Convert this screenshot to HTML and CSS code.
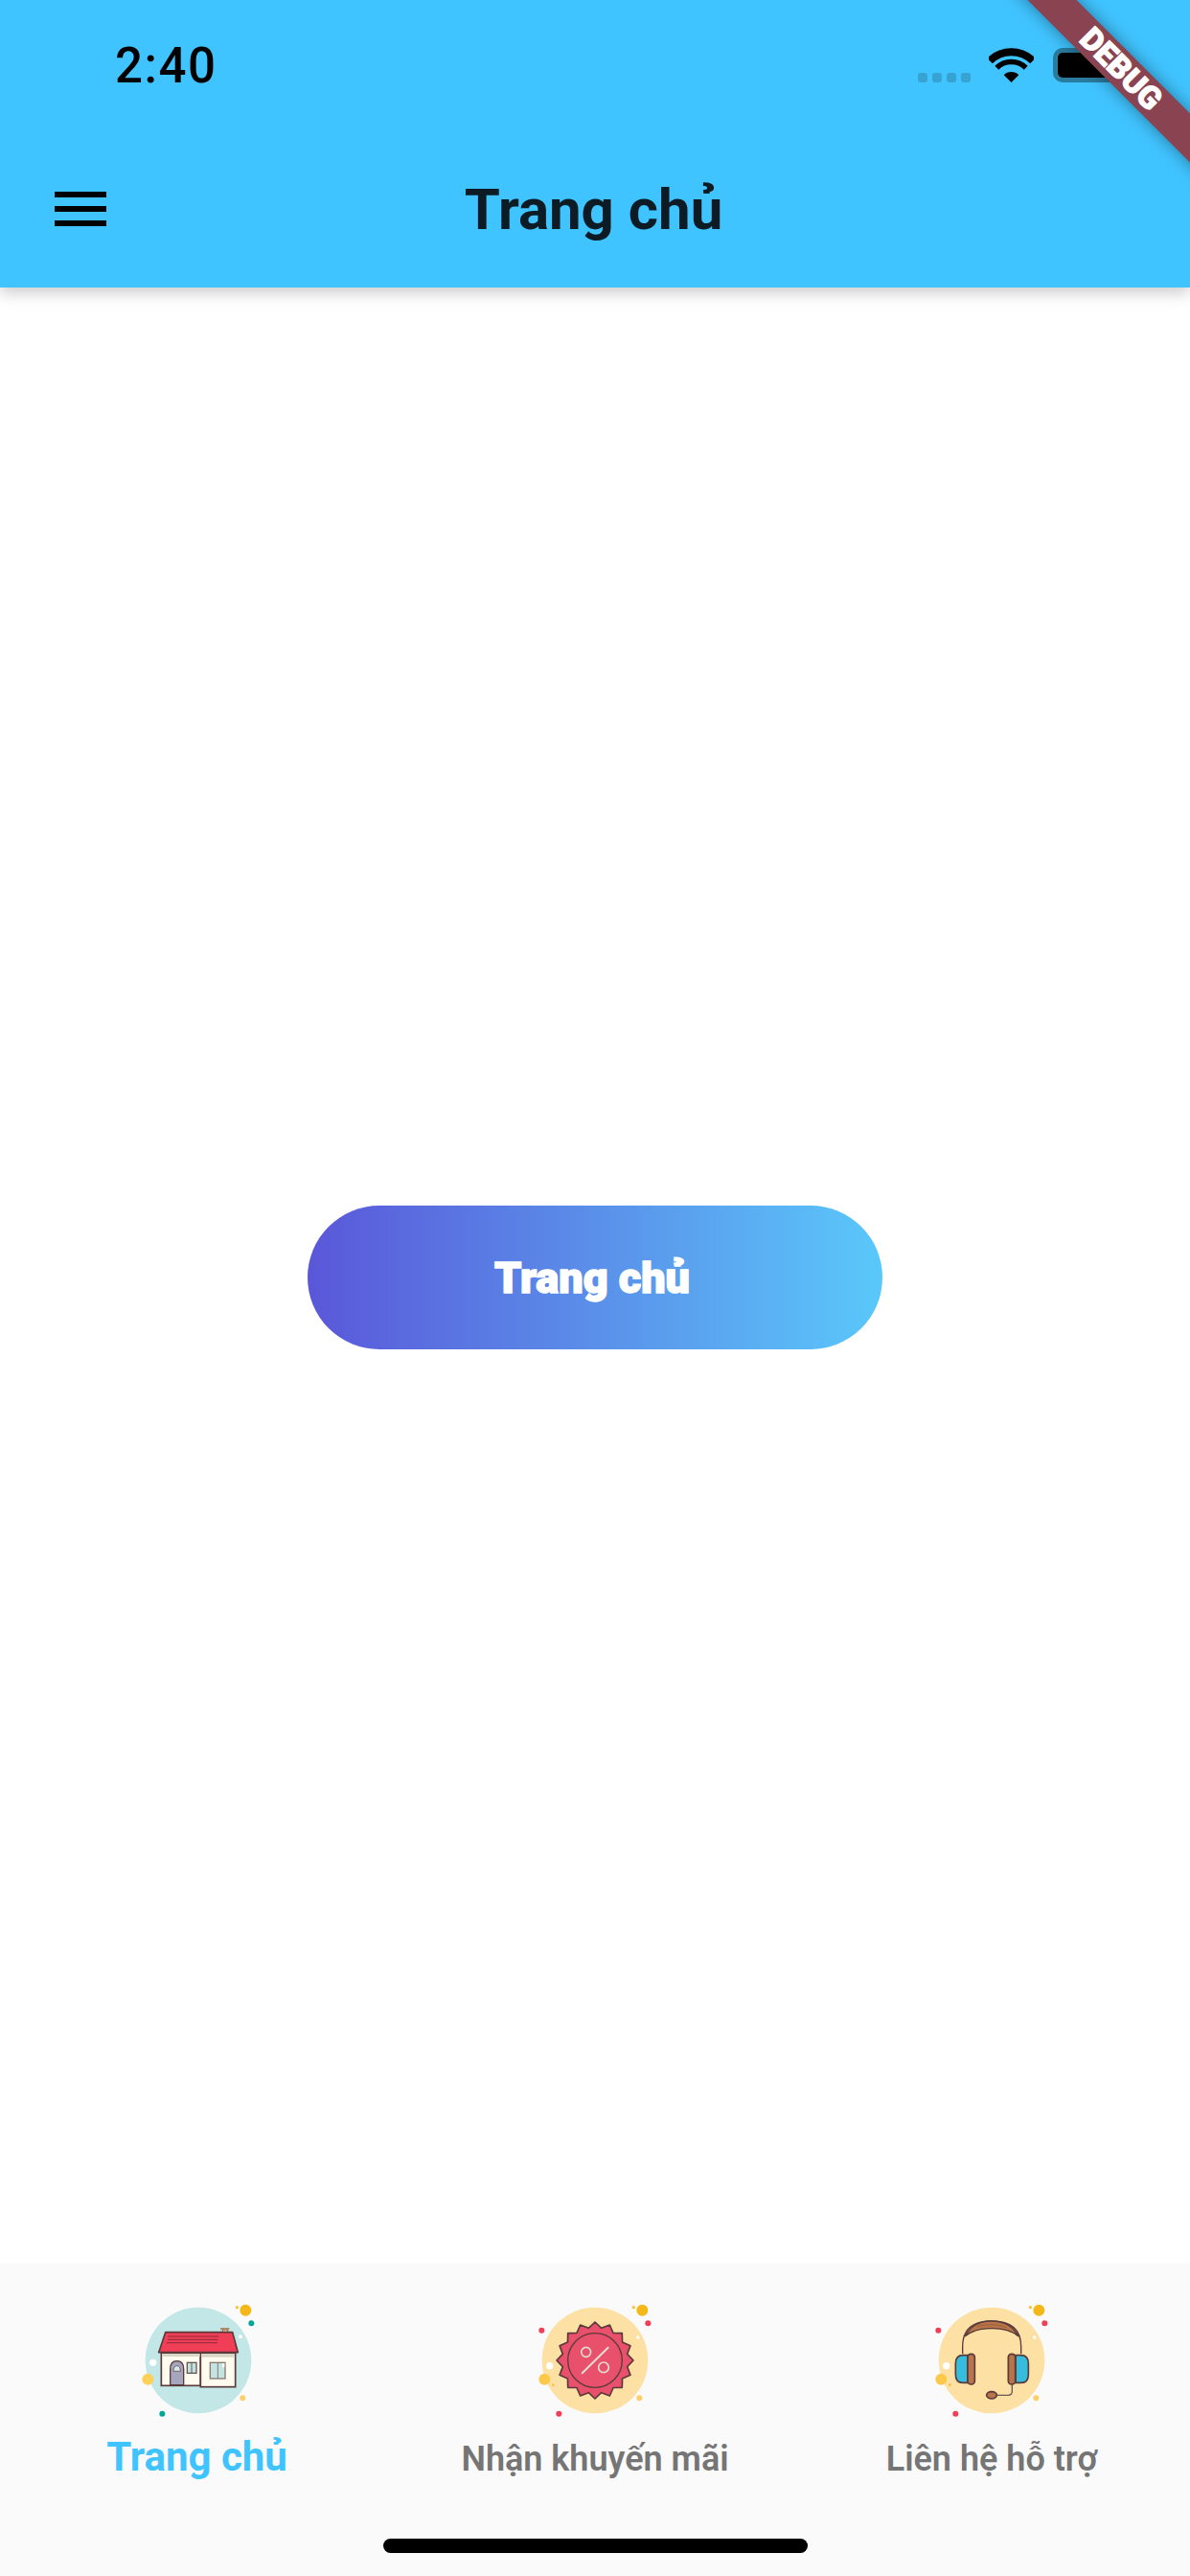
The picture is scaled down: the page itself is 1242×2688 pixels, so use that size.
FILE: index.html
```html
<!DOCTYPE html>
<html lang="vi">
<head>
    <meta charset="UTF-8">
    <meta name="viewport" content="width=device-width, initial-scale=1.0">
    <title>Trang chủ</title>
    <link rel="stylesheet" href="styles.css">
</head>
<body>
    <div class="screen">
        <header class="appbar">
            <div class="statusbar">
                <span class="time">2:40</span>
                <div class="status-icons">
                    <div class="signal"><i></i><i></i><i></i><i></i></div>
                    <svg class="wifi" width="47" height="36" viewBox="0 0 47 36">
                        <path d="M1 13.5A32 32 0 0 1 46 13.5" fill="none" stroke="#000" stroke-width="8"/>
                        <path d="M8.3 20.8A21.5 21.5 0 0 1 38.7 20.8" fill="none" stroke="#000" stroke-width="5.5"/>
                        <path d="M23.5 36L15.7 28.2A11 11 0 0 1 31.3 28.2Z" fill="#000"/>
                    </svg>
                    <div class="battery"><div class="battery-level"></div></div>
                    <div class="battery-cap"></div>
                </div>
            </div>
            <div class="toolbar">
                <div class="menu-icon"><i></i><i></i><i></i></div>
                <h1 class="title">Trang chủ</h1>
                <div></div>
            </div>
        </header>

        <main class="content">
            <button class="gradient-btn">Trang chủ</button>
        </main>

        <nav class="tabbar">
            <div class="tab tab-active">
                <svg class="tab-icon" viewBox="-195 -195 390 390">
                    <g transform="translate(-321 -248)">
                        <circle cx="321" cy="248" r="166" fill="#c3e6e6"/>
                        <circle cx="469" cy="91" r="18" fill="#f4b918"/>
                        <circle cx="442" cy="82" r="5" fill="#f7c23a"/>
                        <circle cx="487" cy="132" r="9" fill="#00a698"/>
                        <circle cx="453" cy="174" r="6" fill="#fff"/>
                        <circle cx="179" cy="255" r="11" fill="#fff"/>
                        <circle cx="163" cy="307" r="18" fill="#fdd05a"/>
                        <circle cx="460" cy="366" r="9" fill="#fcd066"/>
                        <circle cx="208" cy="415" r="9" fill="#00a698"/>
                        <rect x="397" y="152" width="16" height="42" fill="#f7c79b" stroke="#8a6a50" stroke-width="3"/>
                        <rect x="390" y="146" width="28" height="6" fill="#b08a68"/>
                        <rect x="205" y="225" width="123" height="102" fill="#fffbee" stroke="#5a3a3a" stroke-width="5"/>
                        <rect x="328" y="225" width="109" height="106" fill="#fffbee" stroke="#5a3a3a" stroke-width="5"/>
                        <rect x="208" y="228" width="118" height="8" fill="#d9d5c5"/>
                        <rect x="331" y="228" width="103" height="10" fill="#d9d5c5"/>
                        <path d="M218 160H428L445 223H197Z" fill="#ef3e56" stroke="#5a3a3a" stroke-width="5" stroke-linejoin="round"/>
                        <path d="M225 173H385M225 183H383M222 193H380" stroke="#8e2a3a" stroke-width="3"/>
                        <path d="M233 325V275Q233 250 254 250Q275 250 275 275V325Z" fill="#a5a5bd" stroke="#5a3a3a" stroke-width="4"/>
                        <path d="M243 282Q243 265 254 265Q265 265 265 282Z" fill="#d5e8e8" stroke="#5a3a3a" stroke-width="2"/>
                        <rect x="286" y="255" width="29" height="33" fill="#c3e4e2" stroke="#6b5a52" stroke-width="4"/>
                        <path d="M300 255V288" stroke="#6b5a52" stroke-width="3"/>
                        <rect x="358" y="255" width="47" height="50" fill="#c3e4e2" stroke="#8a7a70" stroke-width="4"/>
                        <path d="M382 255V305" stroke="#8a7a70" stroke-width="3"/>
                        <path d="M396 257H403V270H396Z" fill="#fffbee"/>
                    </g>
                </svg>
                <span class="tab-label">Trang chủ</span>
            </div>
            <div class="tab">
                <svg class="tab-icon" viewBox="-195 -195 390 390">
                    <g transform="translate(-333 -248)">
                        <circle cx="333" cy="248" r="166" fill="#fce0a4"/>
                        <circle cx="481" cy="91" r="18" fill="#f4b918"/>
                        <circle cx="454" cy="82" r="5" fill="#f7c23a"/>
                        <circle cx="499" cy="132" r="9" fill="#ef3e56"/>
                        <circle cx="467" cy="176" r="5" fill="#fff"/>
                        <circle cx="191" cy="265" r="11" fill="#fff"/>
                        <circle cx="175" cy="307" r="18" fill="#fdc94a"/>
                        <circle cx="202" cy="325" r="4" fill="#f7c23a"/>
                        <circle cx="472" cy="366" r="9" fill="#fcd066"/>
                        <circle cx="220" cy="415" r="9" fill="#ef3e56"/>
                        <circle cx="166" cy="154" r="9" fill="#ef3e56"/>
                    </g>
                    <polygon points="120,0 101,20 110.9,46 85.6,57.3 84.9,84.9 57.3,85.6 46,110.9 20,101 0,120 -20,101 -46,110.9 -57.3,85.6 -84.9,84.9 -85.6,57.3 -110.9,46 -101,20 -120,0 -101,-20 -110.9,-46 -85.6,-57.3 -84.9,-84.9 -57.3,-85.6 -46,-110.9 -20,-101 0,-120 20,-101 46,-110.9 57.3,-85.6 84.9,-84.9 85.6,-57.3 110.9,-46 101,-20" fill="#e8506b" stroke="#5a3a3a" stroke-width="5" stroke-linejoin="round"/>
                    <circle r="85" fill="none" stroke="#5a3a3a" stroke-width="4"/>
                    <path d="M41 -40L-40 40" stroke="#e0dcd0" stroke-width="6" stroke-linecap="round"/>
                    <circle cx="-28" cy="-26" r="15" fill="none" stroke="#e0dcd0" stroke-width="5"/>
                    <circle cx="27" cy="22" r="16" fill="none" stroke="#e0dcd0" stroke-width="5"/>
                </svg>
                <span class="tab-label">Nhận khuyến mãi</span>
            </div>
            <div class="tab">
                <svg class="tab-icon" viewBox="-195 -195 390 390">
                    <g transform="translate(-345 -248)">
                        <circle cx="345" cy="248" r="166" fill="#fce0a4"/>
                        <circle cx="493" cy="91" r="18" fill="#f4b918"/>
                        <circle cx="466" cy="82" r="5" fill="#f7c23a"/>
                        <circle cx="511" cy="132" r="9" fill="#ef3e56"/>
                        <circle cx="479" cy="176" r="5" fill="#fff"/>
                        <circle cx="203" cy="265" r="11" fill="#fff"/>
                        <circle cx="187" cy="307" r="18" fill="#fdc94a"/>
                        <circle cx="214" cy="325" r="4" fill="#f7c23a"/>
                        <circle cx="484" cy="366" r="9" fill="#fcd066"/>
                        <circle cx="232" cy="415" r="9" fill="#ef3e56"/>
                        <circle cx="178" cy="154" r="9" fill="#ef3e56"/>
                        <path d="M254 228V205Q254 125 345 125Q437 125 437 205V228" fill="none" stroke="#5a3a3a" stroke-width="4"/>
                        <path d="M262 172Q285 125 345 125Q405 125 428 172Q400 148 345 148Q290 148 262 172Z" fill="#b9744a" stroke="#5a3a3a" stroke-width="4" stroke-linejoin="round"/>
                        <path d="M300 142Q345 128 392 145" fill="none" stroke="#8d5434" stroke-width="2"/>
                        <path d="M270 232H255Q232 232 232 258V292Q232 318 255 318H270Z" fill="#36bcdc" stroke="#5a3a3a" stroke-width="5"/>
                        <path d="M420 232H437Q460 232 460 258V292Q460 318 437 318H420Z" fill="#36bcdc" stroke="#5a3a3a" stroke-width="5"/>
                        <rect x="270" y="228" width="22" height="95" rx="10" fill="#b9744a" stroke="#5a3a3a" stroke-width="5"/>
                        <rect x="397" y="228" width="22" height="95" rx="10" fill="#b9744a" stroke="#5a3a3a" stroke-width="5"/>
                        <path d="M409 323V345Q409 357 397 357H360" fill="none" stroke="#6b5a52" stroke-width="4"/>
                        <ellipse cx="345" cy="357" rx="16" ry="11" fill="#b9744a" stroke="#5a3a3a" stroke-width="5"/>
                    </g>
                </svg>
                <span class="tab-label">Liên hệ hỗ trợ</span>
            </div>
        </nav>

        <div class="home-indicator"></div>
        <div class="debug-banner">DEBUG</div>
    </div>
</body>
</html>
```

FILE: styles.css
```css
* {
    box-sizing: border-box;
}

body {
    margin: 0;
    font-family: Roboto, "Noto Sans", sans-serif;
    background-color: #fff;
}

.screen {
    position: relative;
    display: flex;
    flex-direction: column;
    width: 1242px;
    height: 2688px;
    overflow: hidden;
}

.appbar {
    position: relative;
    z-index: 1;
    height: 300px;
    background-color: #40c4ff;
    box-shadow: 0 6px 15px rgba(0, 0, 0, 0.2);
}

.statusbar {
    display: flex;
    align-items: center;
    justify-content: space-between;
    height: 136px;
    padding: 0 67px 0 120px;
}

.time {
    font-size: 51px;
    font-weight: 500;
    letter-spacing: 1.5px;
    color: #000;
}

.status-icons {
    display: flex;
    align-items: flex-end;
    height: 36px;
}

.signal {
    display: flex;
    gap: 5px;
    margin-right: 19px;
}

.signal i {
    width: 10px;
    height: 10px;
    border-radius: 3px;
    background-color: #37a3d3;
}

.wifi {
    margin-right: 20px;
}

.battery {
    width: 71px;
    height: 36px;
    border: 5px solid #2a7ba0;
    border-radius: 10px;
}

.battery-level {
    width: 61px;
    height: 26px;
    background-color: #000;
    border-radius: 5px;
}

.battery-cap {
    width: 5px;
    height: 13px;
    margin-bottom: 11px;
    background-color: #2a7ba0;
    border-radius: 0 3px 3px 0;
}

.toolbar {
    display: grid;
    grid-template-columns: 1fr auto 1fr;
    align-items: center;
    height: 164px;
    padding: 0 60px 0 57px;
}

.menu-icon {
    display: flex;
    flex-direction: column;
    gap: 9px;
    width: 54px;
}

.menu-icon i {
    display: block;
    height: 6px;
    background-color: #000;
}

.title {
    margin: 0;
    font-size: 60px;
    font-weight: 700;
    color: #0d1b24;
}

.content {
    flex: 1;
    display: flex;
    align-items: center;
    justify-content: center;
    padding-top: 4px;
}

.gradient-btn {
    width: 600px;
    height: 150px;
    padding: 0 6px 0 0;
    border: none;
    border-radius: 75px;
    background: linear-gradient(to right, #5a57d9, #5ac8fa);
    color: #fff;
    font-family: Roboto, sans-serif;
    font-size: 45px;
    font-weight: 900;
    -webkit-text-stroke: 1.5px #fff;
}

.tabbar {
    display: grid;
    grid-template-columns: repeat(3, 1fr);
    height: 326px;
    padding-top: 36px;
    background-color: #fafafa;
}

.tab {
    display: flex;
    flex-direction: column;
    align-items: center;
}

.tab-icon {
    width: 130px;
    height: 130px;
}

.tab-label {
    height: 50px;
    margin-top: 13px;
    line-height: 50px;
    font-size: 36px;
    font-weight: 600;
    color: #757575;
}

.tab-active .tab-label {
    margin-top: 11px;
    margin-right: 3px;
    font-size: 42px;
    font-weight: 700;
    color: #40c4ff;
}

.home-indicator {
    position: absolute;
    left: 400px;
    bottom: 24px;
    width: 443px;
    height: 15px;
    border-radius: 8px;
    background-color: #000;
}

.debug-banner {
    position: absolute;
    z-index: 2;
    top: 54px;
    right: -128px;
    width: 400px;
    height: 36px;
    transform: rotate(45deg);
    background-color: #8a4350;
    box-shadow: 0 0 18px rgba(0, 0, 0, 0.4);
    color: #fff;
    font-size: 33px;
    font-weight: 900;
    line-height: 36px;
    text-align: center;
    -webkit-text-stroke: 1px #fff;
}
```
